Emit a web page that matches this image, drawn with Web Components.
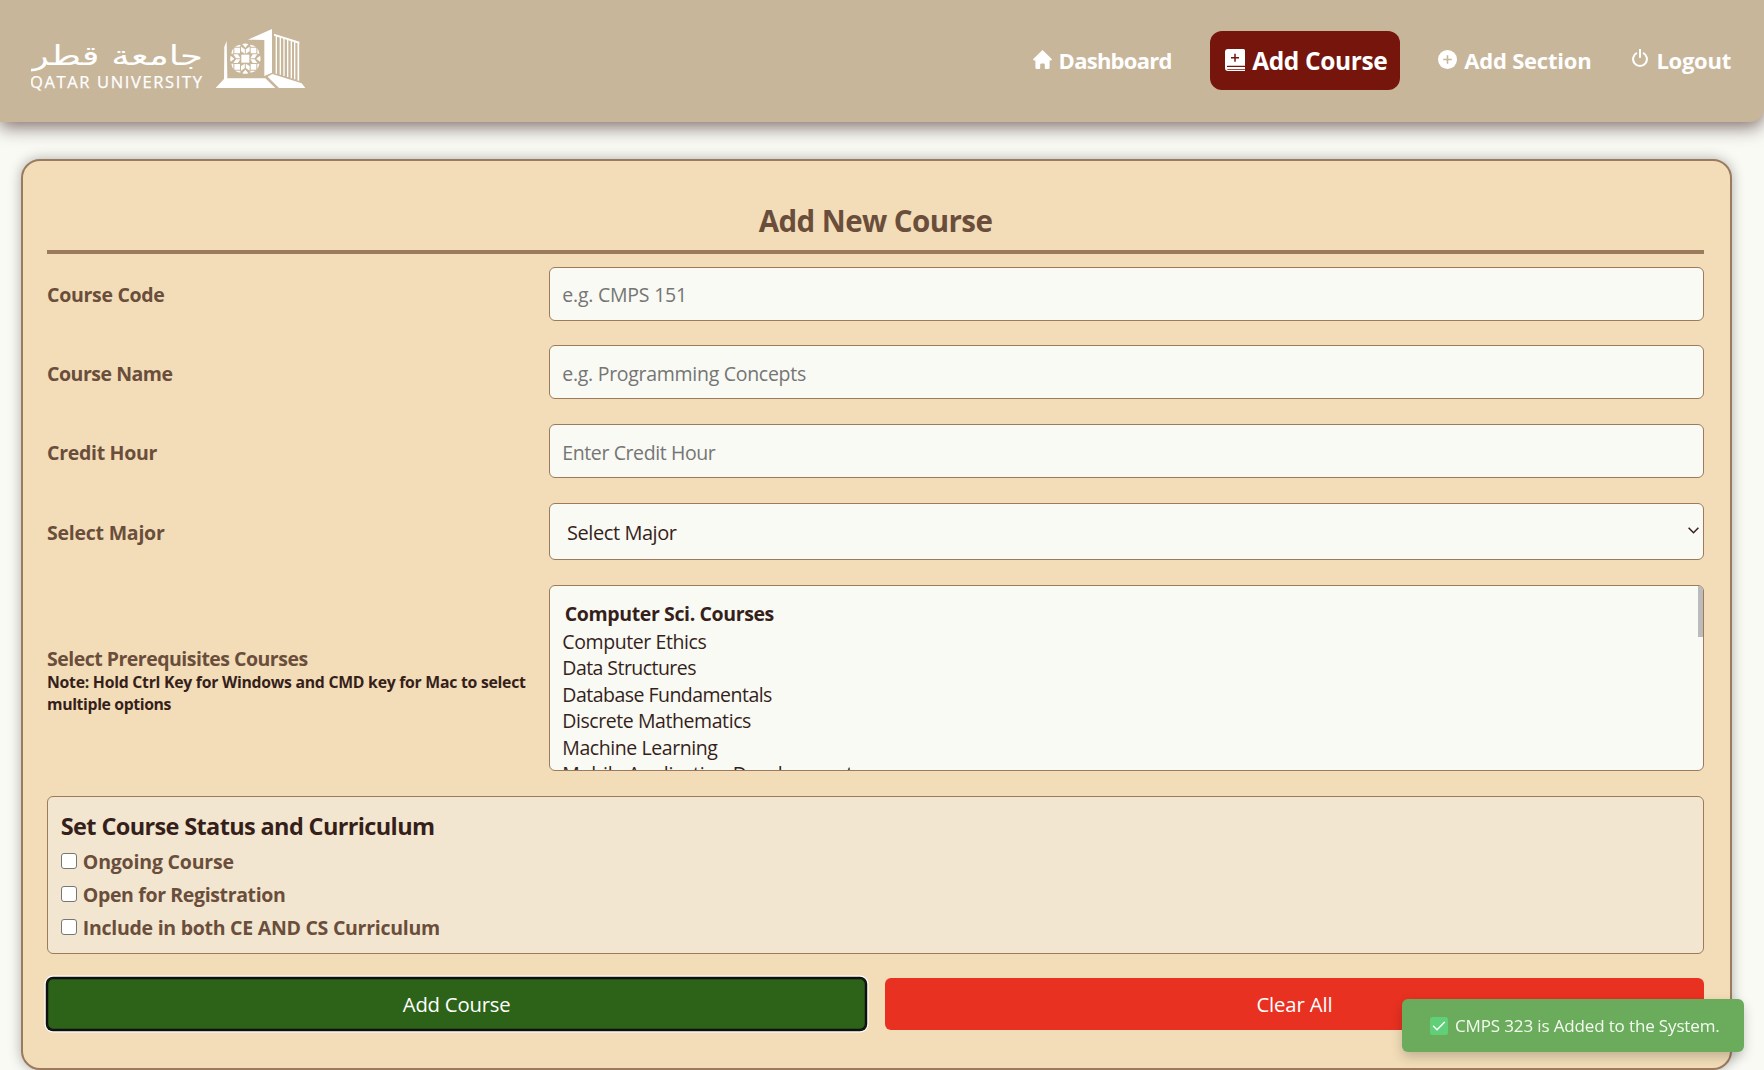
<!DOCTYPE html>
<html lang="en">
<head>
<meta charset="utf-8">
<title>Add Course</title>
<style>
  body { margin: 0; height: 1070px; overflow: hidden; background: #f9faf4; color: #361f1b;
    font-family: "Open Sans", "Noto Sans", sans-serif; font-size: 19.5px; }
  page-header { --shade: rgba(54, 24, 24, .62); }
</style>
</head>
<body>
<page-header>
  <uni-logo slot="brand"></uni-logo>
  <nav-link icon="home" width="113.500" style="margin-right:38px">Dashboard</nav-link>
  <nav-link icon="book" width="135.500" active style="margin-right:38px">Add Course</nav-link>
  <nav-link icon="plus" width="127.500" style="margin-right:40.500px">Add Section</nav-link>
  <nav-link icon="power" width="75">Logout</nav-link>
</page-header>
<course-form></course-form>
<toast-message>CMPS 323 is Added to the System.</toast-message>

<script>
const define = (name, html, setup) => {
  const tpl = document.createElement('template');
  tpl.innerHTML = html;
  customElements.define(name, class extends HTMLElement {
    connectedCallback() {
      if (this.shadowRoot) return;
      this.attachShadow({ mode: 'open' }).append(tpl.content.cloneNode(true));
      if (setup) setup.call(this, this.shadowRoot);
    }
  });
};

/* A single line of text tracked to a given width. */
customElements.define('fit-text', class extends HTMLElement {
  connectedCallback() {
    if (!this.shadowRoot) {
      this.attachShadow({ mode: 'open' }).innerHTML =
        '<style>:host{display:inline-block;white-space:nowrap}span{display:inline-block;white-space:nowrap}</style><span><slot></slot></span>';
    }
    requestAnimationFrame(() => this.fit());
    this.fit();
  }
  fit() {
    const w = parseFloat(this.getAttribute('w'));
    const s = this.shadowRoot.querySelector('span');
    const n = this.textContent.length;
    if (!w || !n) return;
    s.style.letterSpacing = '0px';
    const natural = s.getBoundingClientRect().width;
    if (!natural) return;
    s.style.letterSpacing = ((w + .6 - natural) / n).toFixed(4) + 'px';
  }
});

const icons = {
  home: '<svg width="19" height="19" viewBox="0 0 19 19"><path fill="#fff" d="M9.5 0 19 9.2l-.8 1.2H16.600v7.300q0 1.300-1.300 1.300h-2.600q-.9 0-.9-.9v-3.300q0-1.300-1.200-1.300H8.500q-1.300 0-1.300 1.300v3.300q0 .9-.9.9H3.700q-1.300 0-1.300-1.300v-7.300H.8L0 9.200z"/></svg>',
  book: '<svg width="20" height="22" viewBox="0 0 20 22"><path fill="#fff" d="M3 0h15.500Q20 0 20 1.500v15.200H2.600q-.7 0-.7.700t.7.700H20V20H3.200q-1 0-1.200.2.300.6 1.200.6H20V22H3Q0 22 0 19V3Q0 0 3 0z"/><path stroke="#75150c" stroke-width="1.500" d="M10 4.800v8M6 8.800h8"/></svg>',
  plus: '<svg width="19" height="19" viewBox="0 0 19 19"><circle cx="9.500" cy="9.500" r="9.500" fill="#fff"/><path stroke="#c8b69b" stroke-width="1.600" d="M9.500 5.200v8.600M5.200 9.500h8.600"/></svg>',
  power: '<svg width="16" height="18" viewBox="0 0 16 18"><g fill="none" stroke="#fff" stroke-width="2"><path d="M5 3.800A6.900 6.900 0 1 0 11 3.800"/><path d="M8 0v8.700"/></g></svg>'
};

define('page-header', `
<style>
  :host { display: flex; align-items: center; justify-content: space-between; box-sizing: border-box;
    height: 122px; padding: 0 33px 1.500px 31px; background: #c8b69b; position: relative;
    border-radius: 0 0 14px 0; box-shadow: 0 5px 18px var(--shade); }
  nav { display: flex; align-items: center; }
</style>
<slot name="brand"></slot><nav><slot></slot></nav>`);

define('nav-link', `
<style>
  :host { display: flex; align-items: center; height: 58px; color: #fff; font-weight: 700; font-size: 22px; box-sizing: border-box; }
  #i { display: flex; margin: -2px 7px 0 0; }
  :host([active]) { background: #75150c; border-radius: 12px; padding: 1px 13px 0 15px; font-size: 24.500px; height: 58.500px; }
  :host([active]) #i { margin: -2px 7.500px 0 0; }
  :host([icon=power]) #i { margin: -4px 8.500px 0 0; }
</style>
<span id="i"></span><fit-text></fit-text>`, function (r) {
  r.getElementById('i').innerHTML = icons[this.getAttribute('icon')];
  const t = r.querySelector('fit-text');
  t.setAttribute('w', this.getAttribute('width') - 1);
  t.textContent = this.textContent;
  t.fit();
});

define('uni-logo', `
<style>:host { display: block; margin-top: 0; } svg { display: block; }</style>
<svg width="275" height="64" viewBox="31 28 275 64" fill="#fff">
  <text x="203" y="65" font-family="DejaVu Sans, sans-serif" font-size="27" direction="rtl" textLength="172" lengthAdjust="spacingAndGlyphs">جامعة قطر</text>
  <text x="30" y="87.500" font-family="Open Sans, sans-serif" font-size="16.500" stroke="#fff" stroke-width=".25" textLength="172" lengthAdjust="spacing">QATAR UNIVERSITY</text>
  <g transform="scale(.33333)">
    <path d="M680 123 682 233 672 242 673 140zM674 235H796L826 264H647zM744 119 816 87V218L793 228V120zM817 222 905 250 916 264H837L803 230z"/>
    <path d="M822 101 898 125V131L822 107z"/>
    <g fill="none" stroke="#fff" stroke-width="4">
      <path d="M829 106V221M841 108V224M852 111V228M863 115V231M874 119V235M884 122V238"/><path d="M895 126V242" stroke-width="5"/>
    </g>
    <g transform="translate(736 176)">
      <path d="M-12-12H12V12H-12z"/>
      <path d="M-33-33H-16V-16H-33zM16-33H33V-16H16zM-33 16H-16V33H-33zM16 16H33V33H16z"/>
      <path d="M-1.500-15-13-22V-36L-1.500-28zM1.500-15 13-22V-36L1.500-28zM-9-44Q0-47 9-44L0-33zM-15-37V-42Q-25-40-31-36H-17zM15-37V-42Q25-40 31-36H17z"/>
      <path transform="rotate(90)" d="M-1.500-15-13-22V-36L-1.500-28zM1.500-15 13-22V-36L1.500-28zM-9-44Q0-47 9-44L0-33zM-15-37V-42Q-25-40-31-36H-17zM15-37V-42Q25-40 31-36H17z"/>
      <path transform="rotate(180)" d="M-1.500-15-13-22V-36L-1.500-28zM1.500-15 13-22V-36L1.500-28zM-9-44Q0-47 9-44L0-33zM-15-37V-42Q-25-40-31-36H-17zM15-37V-42Q25-40 31-36H17z"/>
      <path transform="rotate(270)" d="M-1.500-15-13-22V-36L-1.500-28zM1.500-15 13-22V-36L1.500-28zM-9-44Q0-47 9-44L0-33zM-15-37V-42Q-25-40-31-36H-17zM15-37V-42Q25-40 31-36H17z"/>
    </g>
  </g>
</svg>`);

define('form-row', `
<style>
  :host { display: grid; grid-template-columns: 501.500px 1fr; align-items: center; margin-bottom: 24.750px; color: #6a4e3b; }
  .label { font-weight: 700; padding-top: 2px; }
</style>
<div class="label"><slot name="label"></slot></div><slot></slot>`);

define('text-field', `
<style>
  :host { display: flex; align-items: center; box-sizing: border-box; height: 54px; padding: 2px 12.800px 0;
    background: #f9faf4; border: 1.250px solid #9b7a5e; border-radius: 6px; color: #757575; }
</style><slot></slot>`);

define('select-field', `
<style>
  :host { display: flex; align-items: center; justify-content: space-between; box-sizing: border-box; height: 57.500px;
    padding: 2px 4px 0 17.500px; background: #f9faf4; border: 1.250px solid #9b7a5e; border-radius: 6px; color: #361f1b; font-size: 20px; }
  svg { margin-top: -5px; }
</style><slot></slot>
<svg width="11" height="7" viewBox="0 0 11 7"><path d="M.6.8 5.500 5.700 10.400.8" fill="none" stroke="#361f1b" stroke-width="1.500"/></svg>`);

define('course-list', `
<style>
  :host { display: flex; justify-content: space-between; box-sizing: border-box; height: 186px; overflow: hidden;
    background: #f9faf4; border: 1.250px solid #9b7a5e; border-radius: 6px; color: #361f1b; }
  .items { display: flex; flex-direction: column; padding: 14px 0 0 12.800px; }
  .thumb { width: 5px; height: 51px; background: #bbb; }
</style><div class="items"><slot></slot></div><div class="thumb"></div>`);

define('list-option', `
<style>:host { display: block; flex: none; height: 26.600px; line-height: 26.600px; }
:host([group]) { font-weight: 700; height: 28.500px; line-height: 28px; padding-left: 2.500px; }</style><slot></slot>`);

define('check-item', `
<style>
  :host { display: flex; align-items: center; height: 33px; color: #6a4e3b; font-weight: 700; }
  i { box-sizing: border-box; width: 16px; height: 16px; margin: -1.500px 6px 0 0; background: #fff; border: 1.300px solid #767676; border-radius: 3px; }
</style><i></i><slot></slot>`);

define('action-button', `
<style>
  :host { display: flex; flex: 1; align-items: center; justify-content: center; height: 52.500px; border-radius: 6px;
    background: var(--fill); color: #fff; font-size: 20.300px; }
  :host([focused]) { box-shadow: 0 0 0 1.250px #101010, 0 0 0 2.500px #fff, inset 0 0 0 1.250px #101010; }
</style><slot></slot>`);

define('course-form', `
<style>
  :host { display: block; box-sizing: border-box; width: 1711px; height: 911px; margin: 37px 0 0 20.500px; padding: 0 25.500px 0 24.500px;
    background: #f2ddb8; border: 2.500px solid #9b7a5e; border-radius: 19px; box-shadow: 0 0 13px rgba(0,0,0,.3); }
  h1 { display: flex; justify-content: center; box-sizing: border-box; height: 93px; margin: 0 0 12.500px; padding-top: 39px;
    border-bottom: 4px solid #9b7a5e; color: #6a4e3b; font-size: 29.500px; line-height: 42px; }
  .note { display: flex; flex-direction: column; margin-top: 1px; color: #361f1b; font-size: 15.800px; line-height: 22px; }
  .pre { padding-top: 4px; }
  .name { line-height: 22px; }
  .status { box-sizing: border-box; height: 158px; margin-bottom: 24px; padding: 12px 12.800px; background: #f2e6d0;
    border: 1.250px solid #9b7a5e; border-radius: 6px; }
  h2 { margin: 0; height: 36px; line-height: 34px; font-size: 23.500px; color: #361f1b; }
  .actions { display: flex; gap: 18.750px; }
</style>
<h1><fit-text w="233">Add New Course</fit-text></h1>
<form-row><fit-text slot="label" w="117">Course Code</fit-text><text-field><fit-text w="124">e.g. CMPS 151</fit-text></text-field></form-row>
<form-row><fit-text slot="label" w="125">Course Name</fit-text><text-field><fit-text w="243">e.g. Programming Concepts</fit-text></text-field></form-row>
<form-row><fit-text slot="label" w="109.500">Credit Hour</fit-text><text-field><fit-text w="152.500">Enter Credit Hour</fit-text></text-field></form-row>
<form-row><fit-text slot="label" w="117">Select Major</fit-text><select-field><fit-text w="109">Select Major</fit-text></select-field></form-row>
<form-row>
  <div slot="label" class="pre">
    <div class="name"><fit-text w="260">Select Prerequisites Courses</fit-text></div>
    <div class="note"><fit-text w="478">Note: Hold Ctrl Key for Windows and CMD key for Mac to select</fit-text><fit-text w="123.500">multiple options</fit-text></div>
  </div>
  <course-list>
    <list-option group><fit-text w="208.500">Computer Sci. Courses</fit-text></list-option>
    <list-option><fit-text w="143.500">Computer Ethics</fit-text></list-option>
    <list-option><fit-text w="133">Data Structures</fit-text></list-option>
    <list-option><fit-text w="209">Database Fundamentals</fit-text></list-option>
    <list-option><fit-text w="188">Discrete Mathematics</fit-text></list-option>
    <list-option><fit-text w="154.500">Machine Learning</fit-text></list-option>
    <list-option><fit-text w="290">Mobile Application Development</fit-text></list-option>
  </course-list>
</form-row>
<div class="status">
  <h2><fit-text w="373">Set Course Status and Curriculum</fit-text></h2>
  <check-item><fit-text w="150.500">Ongoing Course</fit-text></check-item>
  <check-item><fit-text w="202">Open for Registration</fit-text></check-item>
  <check-item><fit-text w="356.500">Include in both CE AND CS Curriculum</fit-text></check-item>
</div>
<div class="actions">
  <action-button focused style="--fill:#2d6318"><fit-text w="107">Add Course</fit-text></action-button>
  <action-button style="--fill:#e83121"><fit-text w="75.500">Clear All</fit-text></action-button>
</div>`);

define('toast-message', `
<style>
  :host { position: fixed; right: 20px; bottom: 18.500px; display: flex; align-items: center; box-sizing: border-box;
    width: 342px; height: 53px; padding: 1px 0 0 28px; border-radius: 6px; background: #6aac5c; color: #f4faf0; font-size: 17px;
    box-shadow: 0 5px 12px rgba(0,0,0,.2); }
  svg { margin-right: 7px; }
</style>
<svg width="18" height="18" viewBox="0 0 18 18"><rect width="18" height="18" rx="2.500" fill="#5fd077"/><path d="M3.500 9.300 7 12.800 14.500 5.200" fill="none" stroke="#fff" stroke-width="1.500" stroke-linecap="round"/></svg>
<fit-text w="263.500"></fit-text>`, function (r) {
  const t = r.querySelector('fit-text');
  t.setAttribute('w', 264);
  t.textContent = this.textContent;
  t.fit();
});
</script>
</body>
</html>
